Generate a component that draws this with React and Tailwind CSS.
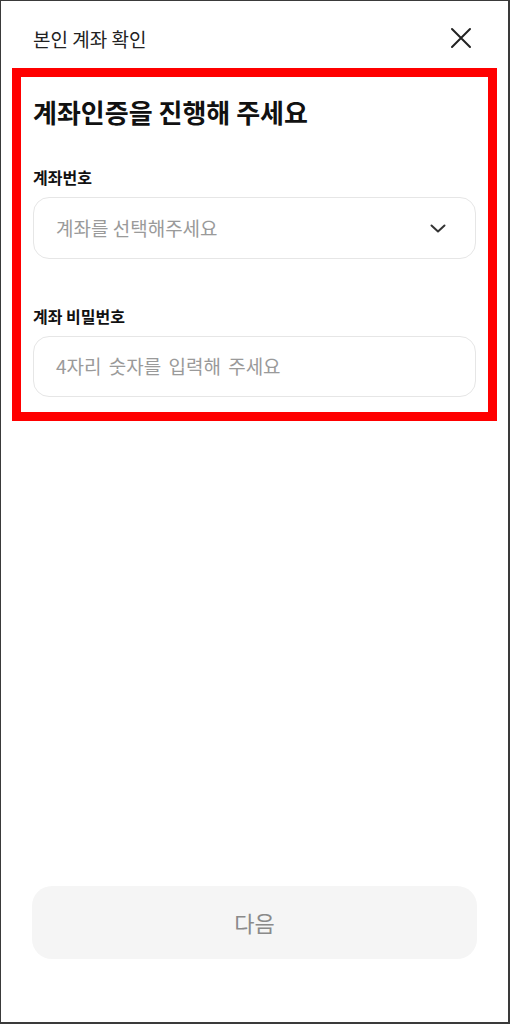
import React from "react";

export default function App() {
  return (
    <div
      className="w-[510px] h-[1024px] bg-white border-l border-t border-r-2 border-b-2 border-[#3a3a3a] flex flex-col"
      style={{ fontFamily: '"Noto Sans CJK KR", "Noto Sans", sans-serif' }}
    >
      <div className="pt-[11px] px-[11px]">
        <div className="h-[56px] flex items-center justify-between pl-[21px] pr-[25px]">
          <span className="text-[19px] leading-[26px] text-[#222] -mt-[3px]">본인 계좌 확인</span>
          <svg width="22" height="22" viewBox="0 0 22 22" fill="none" className="-mt-[4px]">
            <path d="M2 2L20 20M20 2L2 20" stroke="#222" strokeWidth="2" strokeLinecap="round" />
          </svg>
        </div>
        <div className="border-[9px] border-[#ff0000] pt-[17px] pb-[15px] px-[12px]">
          <h1 className="text-[26px] leading-[36px] font-bold text-[#111]">
            계좌인증을 진행해 주세요
          </h1>
          <div className="mt-[36px] text-[16px] leading-[22px] font-semibold text-[#111]">계좌번호</div>
          <div className="mt-[9px] h-[62px] rounded-[16px] border border-[#e6e6e6] flex items-center justify-between pl-[22px] pr-[29px]">
            <span className="text-[19px] text-[#9a9a9a]">계좌를 선택해주세요</span>
            <svg width="16" height="9" viewBox="0 0 16 9" fill="none">
              <path d="M1.5 1.5L8 7.5L14.5 1.5" stroke="#333" strokeWidth="2" strokeLinecap="round" strokeLinejoin="round" />
            </svg>
          </div>
          <div className="mt-[46px] text-[16px] leading-[22px] font-semibold text-[#111]">계좌 비밀번호</div>
          <div className="mt-[9px] h-[61px] rounded-[16px] border border-[#e6e6e6] flex items-center pl-[22px]">
            <span className="text-[19px] text-[#9a9a9a] [word-spacing:3px]">4자리 숫자를 입력해 주세요</span>
          </div>
        </div>
      </div>
      <div className="mt-auto mb-[63px] px-[31px]">
        <div className="h-[73px] rounded-[20px] bg-[#f5f5f5] flex items-center justify-center">
          <span className="text-[22px] text-[#8a8a8a]">다음</span>
        </div>
      </div>
    </div>
  );
}
